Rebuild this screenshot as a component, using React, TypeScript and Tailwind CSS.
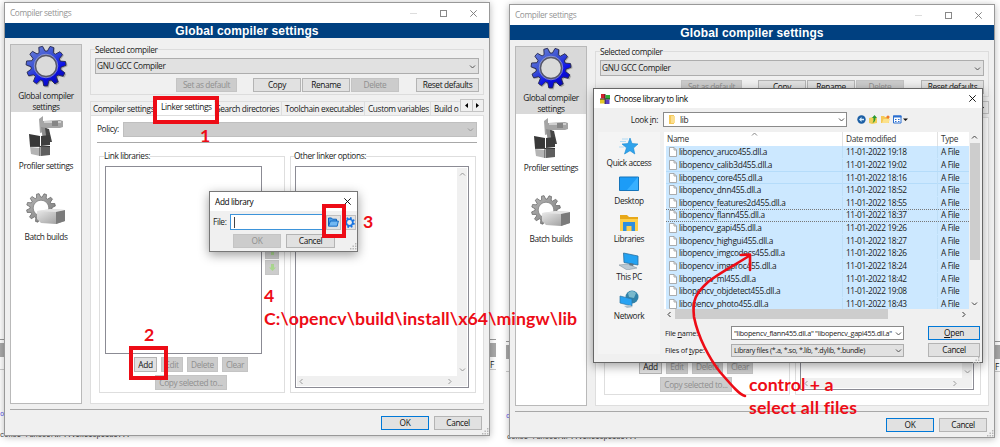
import React from "react";

function gearPath(cx: number, cy: number, outer: number, inner: number, teeth: number) {
  const points: string[] = [];
  const step = (Math.PI * 2) / teeth;
  const profile: [number, number][] = [
    [-0.36, inner],
    [-0.17, outer],
    [0.17, outer],
    [0.36, inner],
  ];
  for (let i = 0; i < teeth; i++) {
    for (const [offset, r] of profile) {
      const a = i * step + offset * step - Math.PI / 2 + 0.3;
      points.push(`${(cx + r * Math.cos(a)).toFixed(2)} ${(cy + r * Math.sin(a)).toFixed(2)}`);
    }
  }
  return `M${points.join("L")}Z`;
}

function BlueGear() {
  return (
    <svg width="44" height="44" viewBox="0 0 44 44">
      <defs>
        <linearGradient id="blueGear" x1="0" y1="0" x2="0.7" y2="1">
          <stop offset="0" stopColor="#7389d8" />
          <stop offset="0.45" stopColor="#3a50d4" />
          <stop offset="0.75" stopColor="#0c10e8" />
          <stop offset="1" stopColor="#0a0ab0" />
        </linearGradient>
      </defs>
      <path d={gearPath(23, 23, 20.5, 15.5, 11)} fill="#777" opacity="0.5" />
      <path d={gearPath(22, 22, 20, 15, 11)} fill="url(#blueGear)" stroke="#26284d" strokeWidth="0.9" strokeLinejoin="round" />
      <circle cx="22" cy="22" r="10.6" fill="#dadada" stroke="#55566a" strokeWidth="1.6" />
      <circle cx="22" cy="22" r="11.8" fill="none" stroke="#b9bdd8" strokeWidth="0.6" />
    </svg>
  );
}

function ProfilerIcon() {
  return (
    <svg width="38" height="42" viewBox="0 0 38 42">
      <path d="M11 3l4-3v5l17-1 3 1v6l-3 1-16 0-1 4-3 1z" fill="#a5a5a5" />
      <path d="M16 5h17v2H16z" fill="#cfcfcf" />
      <path d="M24 5h6v5h-6z" fill="#858585" />
      <path d="M13 11l6 1 3 12h-7z" fill="#8e8e8e" />
      <path d="M17 12l4 1 3 13h-5z" fill="#454545" />
      <path d="M1 18l11 2v10H2z" fill="#383838" />
      <path d="M13 20l9-1v10l-9 1z" fill="#3d3d3d" />
      <path d="M2 31l10 1v8L3 38z" fill="#b4b4b4" />
      <path d="M13 31l9-1v9l-9 1z" fill="#5e5e5e" />
      <path d="M12 30v10M2 30.5h20" stroke="#222" strokeWidth="0.8" />
    </svg>
  );
}

function BatchIcon() {
  return (
    <svg width="40" height="32" viewBox="0 0 40 32">
      <defs>
        <linearGradient id="metal" x1="0" y1="0" x2="1" y2="1">
          <stop offset="0" stopColor="#b8b8b8" />
          <stop offset="1" stopColor="#777" />
        </linearGradient>
        <linearGradient id="brick" x1="0" y1="0" x2="1" y2="1">
          <stop offset="0" stopColor="#ededed" />
          <stop offset="1" stopColor="#959595" />
        </linearGradient>
      </defs>
      <path d={gearPath(15, 15, 14.5, 11, 12)} fill="url(#metal)" stroke="#5f5f5f" strokeWidth="0.7" />
      <circle cx="15" cy="15" r="7.8" fill="#fff" stroke="#777" strokeWidth="0.7" />
      <path d="M11 18l14-2 14 1v11l-9 3-15-1-4-4z" fill="url(#brick)" />
      <path d="M30 18l9-1v11l-9 3z" fill="#7b7b7b" />
      <path d="M11 18l14-2 14 1-9 2z" fill="#e5e5e5" />
    </svg>
  );
}

function Chevron({ className = "", dir = "down" }: { className?: string; dir?: "down" | "up" | "left" | "right" }) {
  const d = {
    down: "M1 2.5L3.5 5L6 2.5",
    up: "M1 4.5L3.5 2L6 4.5",
    left: "M4.5 1L2 3.5L4.5 6",
    right: "M2.5 1L5 3.5L2.5 6",
  }[dir];
  return (
    <svg width="7" height="7" viewBox="0 0 7 7" className={`shrink-0 ${className}`}>
      <path d={d} fill="none" stroke="currentColor" strokeWidth="1" />
    </svg>
  );
}

function CloseGlyph() {
  return (
    <svg width="7" height="7" viewBox="0 0 7 7">
      <path d="M0.3 0.3L6.7 6.7M6.7 0.3L0.3 6.7" stroke="currentColor" strokeWidth="0.9" />
    </svg>
  );
}

function Grip() {
  return (
    <svg width="7" height="7" viewBox="0 0 7 7" fill="#b5b5b5">
      <path d="M5 0h1.4v1.4H5zM5 2.5h1.4v1.4H5zM5 5h1.4v1.4H5zM2.5 2.5h1.4v1.4H2.5zM2.5 5h1.4v1.4H2.5zM0 5h1.4v1.4H0z" />
    </svg>
  );
}

function Btn({ children, className = "", disabled = false, primary = false }: { children: React.ReactNode; className?: string; disabled?: boolean; primary?: boolean }) {
  const look = disabled
    ? "border border-[#c4c4c4] bg-[#cccccc] text-[#8f8f8f]"
    : primary
      ? "border border-[#0078d7] bg-[#e1e1e1] text-[#111]"
      : "border border-[#b4b4b4] bg-[#e1e1e1] text-[#111]";
  return <button className={`flex shrink-0 items-center justify-center whitespace-nowrap ${look} ${className}`}>{children}</button>;
}

function CompilerWindow() {
  return (
    <div className="flex h-[434px] w-[486px] flex-col border border-[#999] bg-[#f0f0f0] shadow-[0_1px_7px_rgba(0,0,0,0.28)]">
      <div className="flex h-[20px] shrink-0 items-center bg-white pl-[5px] text-[#949494]">
        <span className="grow">Compiler settings</span>
        <div className="flex items-center pr-[12px]">
          <span className="h-px w-[7px] bg-[#ddd]" />
          <span className="ml-[23px] h-[7px] w-[7px] border border-[#888]" />
          <span className="ml-[23px] text-[#777]">
            <CloseGlyph />
          </span>
        </div>
      </div>
      <div className="flex h-[15px] shrink-0 items-center justify-center bg-[#004080] font-['Liberation_Sans',sans-serif] text-[12px] font-bold tracking-[0.14px] text-white">
        Global compiler settings
      </div>
      <div className="mt-[6px] flex h-[360px] shrink-0 gap-[8px] pl-[5px]">
        <div className="flex w-[72px] shrink-0 flex-col items-center border border-[#b9b9b9] bg-white text-center leading-[10.5px]">
          <div className="flex h-[67px] w-full flex-col items-center bg-[#d9d9d9]">
            <div className="-mt-px">
              <BlueGear />
            </div>
            <div className="mt-[3px]">
              Global compiler
              <br />
              settings
            </div>
          </div>
          <div className="mt-[4px] ml-[2px]">
            <ProfilerIcon />
          </div>
          <div className="mt-[3px]">Profiler settings</div>
          <div className="mt-[21px]">
            <BatchIcon />
          </div>
          <div className="mt-[7px]">Batch builds</div>
        </div>
        <div className="flex w-[394px] flex-col pt-[5px]">
          <div className="flex h-[46px] shrink-0 flex-col border border-[#dcdcdc] px-[4px]">
            <span className="-mt-[6px] h-[12px] self-start bg-[#f0f0f0] leading-[12px]">Selected compiler</span>
            <div className="mt-[2px] flex h-[16px] items-center justify-between border border-[#adadad] bg-[#e1e1e1] pr-[2px] pl-[1px]">
              GNU GCC Compiler
              <Chevron className="text-[#555]" />
            </div>
            <div className="mt-[4px] flex h-[14px] pl-[81px]">
              <Btn disabled className="w-[61px]">Set as default</Btn>
              <Btn className="ml-[16px] w-[48px]">Copy</Btn>
              <Btn className="ml-px w-[48px]">Rename</Btn>
              <Btn disabled className="ml-px w-[48px]">Delete</Btn>
              <Btn className="ml-[17px] w-[63px]">Reset defaults</Btn>
            </div>
          </div>
          <div className="mt-[4px] flex h-[16px] shrink-0 items-end whitespace-nowrap">
            <div className="flex h-[14px] w-[63px] items-center border border-r-0 border-b-0 border-[#dedede] pl-[2px]">Compiler settings</div>
            <div className="flex h-[16px] w-[61px] items-center bg-white pb-px pl-[8px]">Linker settings</div>
            <div className="flex h-[14px] w-[68px] items-center justify-end border-t border-r border-[#dedede] pr-[2px]">Search directories</div>
            <div className="flex h-[14px] w-[83px] items-center border-t border-r border-[#dedede] pl-[3px]">Toolchain executables</div>
            <div className="flex h-[14px] w-[66px] items-center border-t border-r border-[#dedede] pl-[3px]">Custom variables</div>
            <div className="flex h-[14px] w-[29px] items-center border-t border-[#dedede] pl-[3px]">Build o</div>
            <div className="flex h-[13px] w-[24px] self-start border border-[#c3c3c3] bg-[#f0f0f0] text-black">
              <span className="flex flex-1 items-center justify-center border-r border-[#c3c3c3]">
                <svg width="3" height="5" viewBox="0 0 3 5"><path d="M3 0v5L0 2.5z" /></svg>
              </span>
              <span className="flex flex-1 items-center justify-center">
                <svg width="3" height="5" viewBox="0 0 3 5"><path d="M0 0v5L3 2.5z" /></svg>
              </span>
            </div>
          </div>
          <div className="flex h-[289px] flex-col border border-[#dedede] bg-white px-[6px]">
            <div className="mt-[5px] flex h-[16px] shrink-0 items-center justify-between">
              Policy:
              <div className="flex h-[15px] w-[354px] items-center justify-end border border-[#bfbfbf] bg-[#cccccc] pr-[2px]">
                <Chevron className="text-[#999]" />
              </div>
            </div>
            <div className="mt-[5px] h-px shrink-0 bg-[#a8a8a8]" />
            <div className="mt-[13px] ml-[2px] flex gap-[5px]">
              <div className="flex h-[237px] w-[186px] flex-col border border-[#dedede] pl-[5px]">
                <span className="-mt-[7px] -ml-px h-[12px] self-start bg-white leading-[12px]">Link libraries:</span>
                <div className="mt-[4px] flex">
                  <div className="h-[188px] w-[157px] border border-[#8b8b94] bg-white" />
                  <div className="mt-[78px] ml-[3px] flex flex-col gap-px text-[#a9d68e]">
                    {["M3.5 0L7 3.5H5V7H2V3.5H0z", "M3.5 7L0 3.5H2V0H5V3.5H7z"].map((d) => (
                      <span key={d} className="flex h-[15px] w-[14px] items-center justify-center border border-[#c6c6c6] bg-[#cccccc]">
                        <svg width="7" height="7" viewBox="0 0 7 7" fill="currentColor" className="shrink-0"><path d={d} /></svg>
                      </span>
                    ))}
                  </div>
                </div>
                <div className="mt-[3px] flex h-[15px] gap-[4px] pl-[29px]">
                  <Btn className="w-[23px]">Add</Btn>
                  <Btn disabled className="w-[22px]">Edit</Btn>
                  <Btn disabled className="w-[31px]">Delete</Btn>
                  <Btn disabled className="w-[26px]">Clear</Btn>
                </div>
                <div className="mt-[3px] flex h-[15px] pl-[50px]">
                  <Btn disabled className="w-[72px]">Copy selected to...</Btn>
                </div>
              </div>
              <div className="flex h-[237px] w-[186px] flex-col border border-[#dedede] pl-[4px]">
                <span className="-mt-[7px] -ml-px h-[12px] self-start bg-white leading-[12px]">Other linker options:</span>
                <div className="mt-[4px] flex h-[222px] w-[174px] flex-col border border-[#8b8b94] bg-white p-px">
                  <div className="flex grow justify-end">
                    <div className="flex w-[10px] flex-col items-center justify-between bg-[#f0f0f0] py-[3px] text-[#999]">
                      <Chevron dir="up" />
                      <Chevron />
                    </div>
                  </div>
                  <div className="flex h-[10px] items-center justify-between bg-[#f0f0f0] pr-[14px] pl-px text-[#999]">
                    <Chevron dir="left" />
                    <Chevron dir="right" />
                  </div>
                </div>
              </div>
            </div>
          </div>
        </div>
      </div>
      <div className="mt-[5px] mr-[5px] ml-[5px] h-px shrink-0 bg-[#a8a8a8]" />
      <div className="mt-[6px] flex h-[14px] shrink-0 justify-end gap-[5px] pr-[7px]">
        <Btn primary className="w-[48px]">OK</Btn>
        <Btn className="w-[48px]">Cancel</Btn>
      </div>
      <div className="-mt-[2px] flex justify-end">
        <Grip />
      </div>
    </div>
  );
}

function AddLibraryDialog() {
  return (
    <div className="flex h-[61px] w-[149px] flex-col border border-[#777] bg-[#f0f0f0] shadow-[0_3px_10px_rgba(0,0,0,0.38)]">
      <div className="flex h-[19px] shrink-0 items-center justify-between bg-white pr-[6px] pl-[5px] text-black">
        Add library
        <CloseGlyph />
      </div>
      <div className="mt-[3px] flex h-[16px] items-center pl-[3px]">
        <span className="w-[17px]">File:</span>
        <div className="flex h-[16px] w-[94px] items-center border border-[#3d94da] bg-white pl-[3px]">
          <span className="h-[11px] w-px bg-[#444]" />
        </div>
        <span className="ml-[2px] flex h-[15px] w-[15px] items-center justify-center border border-[#c0c0c0] bg-[#e3e3e3]">
          <svg width="11" height="10" viewBox="0 0 11 10">
            <path d="M0.5 9V1h3l1 1.2h4V4" fill="#4c9ee8" stroke="#0b62bd" />
            <path d="M0.5 9.2L2.4 4h8L9.2 9.2z" fill="#73b8f2" stroke="#0b62bd" strokeWidth="0.9" />
          </svg>
        </span>
        <span className="ml-[2px] flex h-[15px] w-[13px] items-center justify-center border border-[#c0c0c0] bg-[#e3e3e3]">
          <svg width="11" height="11" viewBox="0 0 11 11">
            <path d={gearPath(5.5, 5.5, 5.5, 4, 8)} fill="#1673e0" />
            <circle cx="5.5" cy="5.5" r="2.4" fill="#eee" />
          </svg>
        </span>
      </div>
      <div className="mt-[4px] flex h-[14px] gap-[5px] pl-[23px]">
        <Btn disabled className="w-[48px]">OK</Btn>
        <Btn className="w-[49px]">Cancel</Btn>
      </div>
      <div className="-mt-[5px] flex justify-end">
        <Grip />
      </div>
    </div>
  );
}

const files: [string, string][] = [
  ["aruco", "19:18"],
  ["calib3d", "19:02"],
  ["core", "18:16"],
  ["dnn", "18:52"],
  ["features2d", "18:55"],
  ["flann", "18:37"],
  ["gapi", "19:26"],
  ["highgui", "18:27"],
  ["imgcodecs", "18:26"],
  ["imgproc", "18:24"],
  ["ml", "18:42"],
  ["objdetect", "19:08"],
  ["photo", "18:43"],
];

const places: [string, React.ReactNode][] = [
  [
    "Quick access",
    <svg key="q" width="20" height="18" viewBox="0 0 20 18">
      <path d="M11 1l2 5.5 6 .5-4.5 4 1.3 6L11 13.7 5.5 17l2-6.2L3 7l6-.4z" fill="#2fa3ec" stroke="#1588d2" strokeWidth="0.6" />
      <path d="M3 2h6M1 4.5h6M0 10h5" stroke="#9ed4f5" strokeWidth="0.8" />
    </svg>,
  ],
  [
    "Desktop",
    <svg key="d" width="20" height="18" viewBox="0 0 20 18">
      <path d="M0.5 2h19v13.5h-19z" fill="#1c9cf7" stroke="#1575bb" />
      <path d="M19 2L8 15H19z" fill="#37b0ff" />
    </svg>,
  ],
  [
    "Libraries",
    <svg key="l" width="20" height="18" viewBox="0 0 20 18">
      <path d="M1 1h7l2 2h9v13H1z" fill="#e8a818" />
      <path d="M1 5h18v12H1z" fill="#fccf4b" />
      <path d="M4 8h12v9h-3.5v-5h-5v5H4z" fill="#2c8ee0" />
    </svg>,
  ],
  [
    "This PC",
    <svg key="p" width="20" height="18" viewBox="0 0 20 18">
      <path d="M4.5 1L19 4v9L5 10.5z" fill="#23a2f2" stroke="#29709f" strokeWidth="0.8" />
      <path d="M0 13l9-1 9 4-10 2z" fill="#b9c8d3" stroke="#768994" strokeWidth="0.5" />
      <path d="M11 11l4 1-1 2-4-1z" fill="#5d7482" />
    </svg>,
  ],
  [
    "Network",
    <svg key="n" width="20" height="18" viewBox="0 0 20 18">
      <circle cx="13" cy="7" r="6.5" fill="#3182a8" />
      <path d="M9 3q4-4 8 0l-2 5-5-1z" fill="#79b9cc" />
      <path d="M1 6l12 3v7L1 13z" fill="#28a3f3" stroke="#2c77a5" strokeWidth="0.7" />
      <path d="M5 16l6-1 3 2-6 1z" fill="#aebfca" />
    </svg>,
  ],
];

function ChooseLibraryDialog() {
  return (
    <div className="flex h-[275px] w-[390px] flex-col border border-[#666] bg-[#f0f0f0] shadow-[0_3px_10px_rgba(0,0,0,0.38)]">
      <div className="flex h-[19px] shrink-0 items-center bg-white pr-[6px] pl-[6px] text-black">
        <svg width="10" height="10" viewBox="0 0 10 10">
          <path d="M1 0h4v4.5H1z" fill="#d3202c" />
          <path d="M5.5 1H10v4H5.5z" fill="#2fae37" />
          <path d="M0 5h4.5v4.5H0z" fill="#e6c927" />
          <path d="M5 5.5h4.5V10H5z" fill="#5a3cc4" />
          <path d="M0 5h10M5 0v10" stroke="#222" strokeWidth="0.9" />
        </svg>
        <span className="ml-[4px] grow">Choose library to link</span>
        <CloseGlyph />
      </div>
      <div className="mt-[4px] flex h-[15px] shrink-0 items-center">
        <span className="w-[69px] pr-[5px] text-right">Look <u>i</u>n:</span>
        <div className="flex h-[15px] w-[184px] items-center border border-[#8a8a8a] bg-white pr-[1px] pl-[5px]">
          <svg width="6" height="9" viewBox="0 0 6 9">
            <path d="M0 0h5v9H0z" fill="#f5c95a" />
            <path d="M2 1h4v7H2z" fill="#fbdf92" />
          </svg>
          <span className="ml-[5px] grow">lib</span>
          <Chevron className="text-[#555]" />
        </div>
        <div className="flex items-center gap-[3px] pl-[10px]">
          <svg width="9" height="9" viewBox="0 0 9 9">
            <circle cx="4.5" cy="4.5" r="4.2" fill="#1c5fa5" />
            <path d="M4.5 2L2 4.5L4.5 7V5.3H7V3.7H4.5z" fill="#d9efff" />
          </svg>
          <svg width="9" height="9" viewBox="0 0 9 9">
            <path d="M0 3l4-1 4 1v5l-5 1-3-1z" fill="#f0cf57" />
            <path d="M5.5 0l2.5 3H6.5q0 4-3 5 1.5-2 1-5H3z" fill="#2a9a30" />
          </svg>
          <svg width="9" height="9" viewBox="0 0 9 9">
            <path d="M0 1h3l1 1h4v6H0z" fill="#f5c857" />
            <path d="M1 8l1.5-4H9L7.5 8z" fill="#fbe18c" />
            <circle cx="7" cy="2" r="1.6" fill="#ef7a2b" />
          </svg>
          <svg width="15" height="9" viewBox="0 0 15 9">
            <path d="M0.5 1h7.5v7H0.5z" fill="#fff" stroke="#2b6fd0" />
            <path d="M0 0.5h8.5v2H0z" fill="#2b6fd0" />
            <path d="M2 4h1.5v1H2zM5 4h1.5v1H5zM2 6h1.5v1H2zM5 6h1.5v1H5z" fill="#2b6fd0" />
            <path d="M10 3.5h5L12.5 6z" fill="#111" />
          </svg>
        </div>
      </div>
      <div className="mt-[5px] flex h-[228px] shrink-0 pl-[4px]">
        <div className="flex h-[222px] w-[62px] shrink-0 flex-col items-center bg-[#f4f4f4] pt-[5px]">
          {places.map(([label, icon]) => (
            <div key={label} className="flex h-[38.3px] shrink-0 flex-col items-center">
              {icon}
              <span className="mt-[1.5px] leading-[12px]">{label}</span>
            </div>
          ))}
        </div>
        <div className="ml-[4px] flex w-[316px] flex-col">
          <div className="flex h-[177px] shrink-0 bg-white">
            <div className="flex w-[305px] flex-col overflow-hidden pl-[2px]">
              <div className="flex h-[14px] shrink-0 items-center text-[#333]">
                <span className="w-[85px] pl-px">Name</span>
                <span className="w-[91px] self-start text-[#888]">
                  <Chevron dir="up" className="-mt-px" />
                </span>
                <span className="h-full w-[95px] border-l border-[#e2e2e2] pl-[3px] leading-[14px]">Date modified</span>
                <span className="h-full border-l border-[#e2e2e2] pl-[3px] leading-[14px]">Type</span>
              </div>
              {files.map(([name, time], i) => (
                <div
                  key={name}
                  className={
                    i === 5
                      ? "flex h-[12.64px] shrink-0 items-center border-y border-dotted border-[#777] bg-[#cce8ff]"
                      : i === 2
                        ? "flex h-[12.64px] shrink-0 items-center border-y border-[#b5dcfa] bg-[#cce8ff]"
                        : "flex h-[12.64px] shrink-0 items-center bg-[#cce8ff]"
                  }
                >
                  <svg width="8" height="10" viewBox="0 0 8 10" className="ml-[3px] shrink-0">
                    <path d="M0.5 0.5h4.5l2.5 2.5v6.5h-7z" fill="#fff" stroke="#999" strokeWidth="0.8" />
                    <path d="M5 0.5v2.5h2.5" fill="none" stroke="#999" strokeWidth="0.8" />
                  </svg>
                  <span className="ml-[2px] w-[163px] tracking-[-0.3px]">{`libopencv_${name}455.dll.a`}</span>
                  <span className="w-[95px] border-l border-[#bfdff7] pl-[3px]">11-01-2022 {time}</span>
                  <span className="border-l border-[#bfdff7] pl-[3px]">A File</span>
                </div>
              ))}
            </div>
            <div className="flex w-[11px] flex-col items-center bg-[#f0f0f0] text-[#444]">
              <Chevron dir="up" className="my-[2px]" />
              <div className="h-[117px] w-[10px] bg-[#cdcdcd]" />
              <Chevron className="mt-auto mb-[2px]" />
            </div>
          </div>
          <div className="flex h-[10px] shrink-0 items-center bg-[#f0f0f0] pl-[2px] text-[#333]">
            <Chevron dir="left" />
            <div className="ml-[2px] h-[10px] w-[213px] bg-[#cdcdcd]" />
            <Chevron dir="right" className="ml-[72px]" />
          </div>
          <div className="mt-[7px] flex h-[14px] shrink-0 items-center pl-px">
            <span className="w-[66px] text-[7.4px] tracking-[-0.23px]">File <u>n</u>ame:</span>
            <div className="flex h-[14px] w-[173px] items-center border border-[#8a8a8a] bg-white pr-[1px] pl-[2px]">
              <span className="w-[160px] overflow-hidden text-[7.2px] tracking-[-0.26px] whitespace-nowrap">"libopencv_flann455.dll.a" "libopencv_gapi455.dll.a"</span>
              <Chevron className="ml-auto text-[#555]" />
            </div>
            <Btn primary className="ml-[24px] h-[14px] w-[52px]"><u>O</u>pen</Btn>
          </div>
          <div className="mt-[3px] flex h-[14px] shrink-0 items-center pl-px">
            <span className="w-[66px] text-[7.4px] tracking-[-0.23px]">Files of <u>t</u>ype:</span>
            <div className="flex h-[13px] w-[173px] items-center border border-[#adadad] bg-[#e1e1e1] pr-[1px] pl-[2px]">
              <span className="grow text-[7.1px] tracking-[-0.3px] whitespace-nowrap">Library files (*.a, *.so, *.lib, *.dylib, *.bundle)</span>
              <Chevron className="text-[#555]" />
            </div>
            <Btn className="ml-[24px] h-[14px] w-[52px]">Cancel</Btn>
          </div>
          <div className="flex justify-end">
            <Grip />
          </div>
        </div>
      </div>
    </div>
  );
}

function BackdropEdge({ className, label = "" }: { className: string; label?: string }) {
  return (
    <div className={`absolute flex w-[6px] flex-col ${className}`}>
      <div className="h-px bg-[#999]" />
      <div className="mt-[3px] h-[14px] bg-[#a9a9a9]" />
      <div className="mt-[3px] h-[10px] border-b border-[#ccc] leading-[10px]">{label}</div>
    </div>
  );
}

export default function App() {
  return (
    <div className="relative h-[447px] w-[1000px] overflow-hidden bg-white font-['Open_Sans','Noto_Sans',sans-serif] text-[8.3px] leading-[12px] tracking-[-0.37px] text-[#1a1a1a]">
      <BackdropEdge className="top-[339px] left-0" />
      <BackdropEdge className="top-[339px] left-[490px]" label="F" />
      <BackdropEdge className="top-[341px] left-[506px]" />
      <BackdropEdge className="top-[341px] left-[995px]" label="F" />
      <div className="absolute top-[431px] left-0 font-['Liberation_Mono',monospace] text-[7px] leading-[8px] tracking-[0px] text-[#333]">conse runcoerw/..vikeiopeide...</div>
      <div className="absolute top-[433px] left-[507px] font-['Liberation_Mono',monospace] text-[7px] leading-[8px] tracking-[0px] text-[#333]">conse runcoerw/..vikeiopeide...</div>
      <div className="absolute top-[408px] left-0 font-['Liberation_Mono',monospace] text-[7px] text-[#5353e8]">o</div>
      <div className="absolute top-[410px] left-[506px] font-['Liberation_Mono',monospace] text-[7px] text-[#5353e8]">o</div>

      <div className="absolute top-[2px] left-[4px]">
        <CompilerWindow />
      </div>
      <div className="absolute top-[4px] left-[509px]">
        <CompilerWindow />
      </div>
      <div className="absolute top-[191px] left-[209px]">
        <AddLibraryDialog />
      </div>
      <div className="absolute top-[88px] left-[593px]">
        <ChooseLibraryDialog />
      </div>

      <div className="absolute top-[96px] left-[153px] h-[28px] w-[66px] border-4 border-[#ed0c16]" />
      <div className="absolute top-[346px] left-[129px] h-[34px] w-[39px] border-4 border-[#ed0c16]" />
      <div className="absolute top-[204px] left-[322px] h-[34px] w-[24px] border-4 border-[#ed0c16]" />
      <div className="font-['Lato',sans-serif] text-[17.7px] leading-[20px] font-bold tracking-[0.08px] whitespace-nowrap text-[#ed0c16]">
        <span className="absolute top-[126px] left-[200px]">1</span>
        <span className="absolute top-[325px] left-[144px]">2</span>
        <span className="absolute top-[212px] left-[363px]">3</span>
        <span className="absolute top-[286px] left-[264px]">4</span>
        <span className="absolute top-[309px] left-[264px]">C:\opencv\build\install\x64\mingw\lib</span>
        <span className="absolute top-[375px] left-[749px]">control + a</span>
        <span className="absolute top-[398px] left-[749px] tracking-[0.2px]">select all files</span>
      </div>
      <svg className="absolute top-[240px] left-[680px]" width="90" height="165" viewBox="680 240 90 165" fill="none" stroke="#ed0c16" strokeWidth="2.6" strokeLinecap="round" strokeLinejoin="round">
        <path d="M745 396C740 395 733 387 720 372C709 358 698 337 694 317C692 300 696 293 708 282C719 273 735 265 749 256" />
        <path d="M741 255L750 254.5L750 270" />
      </svg>
    </div>
  );
}
